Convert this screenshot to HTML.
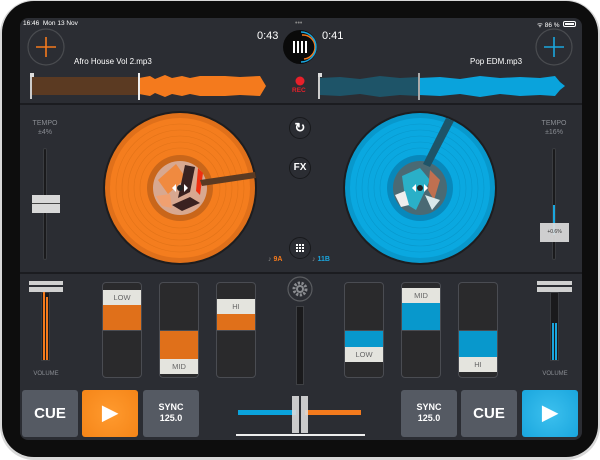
<!DOCTYPE html><html><head><style>
*{margin:0;padding:0;box-sizing:border-box}
body{width:600px;height:460px;background:#fff;font-family:"Liberation Sans",sans-serif;position:relative;overflow:hidden}
.a{position:absolute}
.t{color:#fff;white-space:nowrap}
.g{color:#8a8d93;font-size:7px;text-align:center}
.eq{position:absolute;background:#2a2a2c;border:1px solid #4a4c52;border-radius:4px;width:40px;height:96px;top:282px;overflow:hidden}
.eq .ln{position:absolute;left:0;right:0;top:47px;height:1px;background:#4a4c52}
.eq .h{position:absolute;left:-1px;right:-1px;height:15px;background:#e4e4de;color:#666;font-size:7.5px;text-align:center;line-height:15px}
.btn{position:absolute;top:390px;height:47px;width:56px;border-radius:3px;background:#555a63;color:#fff;text-align:center;font-weight:bold}
.cb{position:absolute;width:22px;height:22px;border-radius:50%;border:1px solid #18191c;background:#2b2d33;color:#fff;font-size:10px;font-weight:bold;text-align:center;line-height:20px}
</style></head><body>
<div class="a" style="left:0;top:0;width:600px;height:460px;border-radius:34px;background:#d8d8d8"></div>
<div class="a" style="left:2px;top:1px;width:596px;height:456px;border-radius:32px;background:#0d0d0d"></div>
<div class="a" style="left:20px;top:18px;width:562px;height:422px;border-radius:8px;background:#2b2d33;overflow:hidden">
</div>
<div class="a" style="left:20px;top:103px;width:562px;height:2px;background:#1b1c20"></div>
<div class="a" style="left:20px;top:272px;width:562px;height:2px;background:#1b1c20"></div>
<div class="a t" style="left:23px;top:20px;font-size:6.5px">16:46&nbsp; Mon 13 Nov</div>
<div class="a" style="left:295px;top:20px;color:#888;font-size:7px">•••</div>
<div class="a t" style="left:537px;top:20px;font-size:6.5px">ᯤ 86 %</div>
<div class="a" style="left:563px;top:21px;width:13px;height:6px;border:1px solid #fff;border-radius:2px;padding:1px"><div style="width:9px;height:2px;background:#fff"></div></div>
<svg class="a" style="left:0;top:0" width="600" height="460">
<circle cx="46" cy="47" r="18" fill="none" stroke="#4a4c50" stroke-width="1.2"/>
<path d="M36 47h20M46 37v20" stroke="#f47a1d" stroke-width="1.6"/>
<circle cx="554" cy="47" r="18" fill="none" stroke="#4a4c50" stroke-width="1.2"/>
<path d="M544 47h20M554 37v20" stroke="#1aa6de" stroke-width="1.6"/>
<circle cx="300" cy="47" r="17" fill="#0a0a0a"/>
<path d="M302 35 A12 12 0 0 1 304 59" fill="none" stroke="#f47a1d" stroke-width="1.5"/>
<path d="M301 32 A15 15 0 0 1 301 62" fill="none" stroke="#1aa6de" stroke-width="1.5"/>
<path d="M294 41v12M298 41v12M302 41v12M306 41v12" stroke="#fff" stroke-width="2"/>
<rect x="31" y="77" width="108" height="18" fill="#5b3a22"/>
<path d="M139 78 L150 76 155 79 165 75 172 78 182 76 190 78 200 76 225 76 240 77 260 76 266 86 260 96 240 95 225 96 200 96 190 94 182 96 172 94 165 97 155 93 150 96 139 94Z" fill="#f47a1d"/>
<rect x="30" y="74" width="2" height="25" fill="#ccc"/><rect x="30" y="73" width="4" height="4" fill="#ddd"/>
<rect x="138" y="73" width="2" height="27" fill="#eee"/>
<path d="M320 78 L340 77 360 79 380 76 400 78 419 77 419 96 400 95 380 97 360 94 340 96 320 95Z" fill="#1e5468"/>
<path d="M419 78 L440 77 460 79 480 76 500 78 520 77 540 78 555 76 560 82 565 86 560 90 555 96 540 95 520 96 500 94 480 97 460 94 440 96 419 95Z" fill="#0aa3dc"/>
<rect x="318" y="74" width="2" height="25" fill="#ccc"/><rect x="318" y="73" width="4" height="4" fill="#ddd"/>
<rect x="418" y="73" width="2" height="27" fill="#aaa"/>
<circle cx="300" cy="81" r="4.5" fill="#e8202a"/>
<!-- left deck -->
<circle cx="180" cy="188" r="77" fill="#1d1d1f"/>
<circle cx="180" cy="188" r="75" fill="#e0701a"/>
<circle cx="180" cy="188" r="70" fill="#f47d1e"/>
<g fill="none" stroke="#e27318" stroke-width="0.6"><circle cx="180" cy="188" r="64"/><circle cx="180" cy="188" r="58"/><circle cx="180" cy="188" r="52"/><circle cx="180" cy="188" r="46"/><circle cx="180" cy="188" r="40"/></g>
<circle cx="180" cy="188" r="33" fill="#c9661a"/>
<circle cx="180" cy="188" r="27" fill="#d8a890"/>
<path d="M158 180l18-16 10 14-18 16z" fill="#f08a40"/><path d="M156 196l14-2 2 14-10-2z" fill="#f0a070"/><path d="M185 165l10 2-5 25-12 6z" fill="#3a2220"/><path d="M172 205l18-8 10 6-18 8z" fill="#3a2220"/><path d="M198 168l5 5-3 22-4-4z" fill="#f03010"/>
<path d="M200 180 L255 172 256 178 202 186Z" fill="#5b3a22"/>
<circle cx="180" cy="188" r="3" fill="#222"/><path d="M176 184l-4 4 4 4zM184 184l4 4-4 4z" fill="#fff"/>
<!-- right deck -->
<circle cx="420" cy="188" r="77" fill="#1d1d1f"/>
<circle cx="420" cy="188" r="75" fill="#0898cc"/>
<circle cx="420" cy="188" r="70" fill="#0aa8e0"/>
<g fill="none" stroke="#0898cc" stroke-width="0.6"><circle cx="420" cy="188" r="64"/><circle cx="420" cy="188" r="58"/><circle cx="420" cy="188" r="52"/><circle cx="420" cy="188" r="46"/><circle cx="420" cy="188" r="40"/></g>
<circle cx="420" cy="188" r="33" fill="#0888bb"/>
<circle cx="420" cy="188" r="27" fill="#4a6a74"/>
<path d="M402 176l18-8 10 12-14 30-10-6z" fill="#2ab0c8"/><path d="M430 170l10 10-6 20-6-10z" fill="#c07050"/><path d="M395 195l10-4 4 14-8 2z" fill="#eee"/><path d="M425 195l15 5-8 10z" fill="#d8e8ea"/>
<path d="M446 118 L454 121 430 167 423 164Z" fill="#1e5468"/>
<circle cx="420" cy="188" r="3" fill="#222"/><path d="M416 184l-4 4 4 4zM424 184l4 4-4 4z" fill="#fff"/>
<!-- gear -->
<circle cx="300" cy="289" r="12" fill="none" stroke="#5a5c60" stroke-width="1.2"/>
<circle cx="300" cy="289" r="6" fill="none" stroke="#8a8c90" stroke-width="3" stroke-dasharray="2.2 1.5"/>
<circle cx="300" cy="289" r="4" fill="#8a8c90"/><circle cx="300" cy="289" r="2" fill="#2b2d33"/>
</svg>
<div class="a" style="left:257px;top:30px;color:#fff;font-size:11px">0:43</div>
<div class="a" style="left:322px;top:30px;color:#fff;font-size:11px">0:41</div>
<div class="a t" style="left:74px;top:57px;font-size:8px">Afro House Vol 2.mp3</div>
<div class="a t" style="left:470px;top:57px;font-size:8px">Pop EDM.mp3</div>
<div class="a" style="left:292px;top:87px;color:#e8202a;font-size:6.5px;font-weight:bold">REC</div>
<div class="cb" style="left:289px;top:117px;font-size:13px;line-height:19px">↻</div>
<div class="cb" style="left:289px;top:157px">FX</div>
<div class="cb" style="left:289px;top:237px"><svg width="20" height="20" style="display:block"><g fill="#fff"><rect x="6" y="6" width="2" height="2"/><rect x="9" y="6" width="2" height="2"/><rect x="12" y="6" width="2" height="2"/><rect x="6" y="9" width="2" height="2"/><rect x="9" y="9" width="2" height="2"/><rect x="12" y="9" width="2" height="2"/><rect x="6" y="12" width="2" height="2"/><rect x="9" y="12" width="2" height="2"/><rect x="12" y="12" width="2" height="2"/></g></svg></div>
<div class="a" style="left:268px;top:256px;color:#f47a1d;font-size:7px;font-weight:bold"><span style="color:#888">♪</span> 9A</div>
<div class="a" style="left:312px;top:256px;color:#1aa6de;font-size:7px;font-weight:bold"><span style="color:#888">♪</span> 11B</div>
<!-- tempo -->
<div class="a g" style="left:30px;top:119px;width:30px;line-height:9px">TEMPO<br>±4%</div>
<div class="a" style="left:43px;top:148px;width:4px;height:112px;background:#1a1a1c;border:1px solid #3a3c40;border-radius:2px"></div>
<div class="a" style="left:32px;top:195px;width:28px;height:18px;background:#d8d8d8;border-top:8.5px solid #d8d8d8"><div style="height:1px;background:#444"></div></div>
<div class="a g" style="left:539px;top:119px;width:30px;line-height:9px">TEMPO<br>±16%</div>
<div class="a" style="left:552px;top:148px;width:4px;height:112px;background:#1a1a1c;border:1px solid #3a3c40;border-radius:2px"></div>
<div class="a" style="left:553px;top:205px;width:2px;height:30px;background:#1aa6de"></div>
<div class="a" style="left:540px;top:223px;width:29px;height:19px;background:rgba(220,220,220,.92);font-size:5px;color:#333;text-align:center;line-height:19px">+0.6%</div>
<!-- volume -->
<div class="a" style="left:29px;top:281px;width:34px;height:4px;background:#d0d0d0"></div>
<div class="a" style="left:29px;top:287px;width:34px;height:5px;background:#d0d0d0"></div>
<div class="a" style="left:41px;top:292px;width:9px;height:69px;background:#1a1a1c;border:1px solid #3a3c40"></div>
<div class="a" style="left:43px;top:292px;width:2px;height:68px;background:#f47a1d"></div>
<div class="a" style="left:46px;top:297px;width:2px;height:63px;background:#f47a1d"></div>
<div class="a g" style="left:28px;top:371px;width:36px;font-size:6px">VOLUME</div>
<div class="a" style="left:537px;top:281px;width:35px;height:4px;background:#d0d0d0"></div>
<div class="a" style="left:537px;top:287px;width:35px;height:5px;background:#d0d0d0"></div>
<div class="a" style="left:550px;top:292px;width:9px;height:69px;background:#1a1a1c;border:1px solid #3a3c40"></div>
<div class="a" style="left:552px;top:323px;width:2px;height:37px;background:#1aa6de"></div>
<div class="a" style="left:555px;top:323px;width:2px;height:37px;background:#1aa6de"></div>
<div class="a g" style="left:537px;top:371px;width:36px;font-size:6px">VOLUME</div>
<!-- eq -->
<div class="eq" style="left:102px"><div class="ln"></div><div class="a" style="left:0;right:0;top:22px;height:25px;background:#e0701a"></div><div class="h" style="top:7px">LOW</div></div>
<div class="eq" style="left:159px"><div class="ln"></div><div class="a" style="left:0;right:0;top:48px;height:28px;background:#e0701a"></div><div class="h" style="top:76px">MID</div></div>
<div class="eq" style="left:216px"><div class="ln"></div><div class="a" style="left:0;right:0;top:31px;height:16px;background:#e0701a"></div><div class="h" style="top:16px">HI</div></div>
<div class="eq" style="left:344px"><div class="ln"></div><div class="a" style="left:0;right:0;top:48px;height:16px;background:#0898cc"></div><div class="h" style="top:64px">LOW</div></div>
<div class="eq" style="left:401px"><div class="ln"></div><div class="a" style="left:0;right:0;top:20px;height:27px;background:#0898cc"></div><div class="h" style="top:5px">MID</div></div>
<div class="eq" style="left:458px"><div class="ln"></div><div class="a" style="left:0;right:0;top:48px;height:26px;background:#0898cc"></div><div class="h" style="top:74px">HI</div></div>
<div class="a" style="left:296px;top:306px;width:8px;height:79px;background:#1a1a1c;border:1px solid #3e4044"></div>
<!-- buttons -->
<div class="btn" style="left:22px;font-size:15px;line-height:47px">CUE</div>
<div class="btn" style="left:82px;background:radial-gradient(circle,#ff9a2e,#f58518);font-size:20px;line-height:47px">▶</div>
<div class="btn" style="left:143px;font-size:9px;padding-top:12px;line-height:11px">SYNC<br>125.0</div>
<div class="btn" style="left:401px;font-size:9px;padding-top:12px;line-height:11px">SYNC<br>125.0</div>
<div class="btn" style="left:461px;font-size:15px;line-height:47px">CUE</div>
<div class="btn" style="left:522px;background:radial-gradient(circle,#3cc0ee,#1aa6de);font-size:20px;line-height:47px">▶</div>
<!-- crossfader -->
<div class="a" style="left:238px;top:410px;width:58px;height:5px;background:#0aa3dc"></div>
<div class="a" style="left:305px;top:410px;width:56px;height:5px;background:#f47a1d"></div>
<div class="a" style="left:292px;top:396px;width:7px;height:37px;background:rgba(220,220,220,.9)"></div>
<div class="a" style="left:301px;top:396px;width:7px;height:37px;background:rgba(220,220,220,.9)"></div>
<div class="a" style="left:236px;top:434px;width:129px;height:2px;background:#eee"></div>
</body></html>
